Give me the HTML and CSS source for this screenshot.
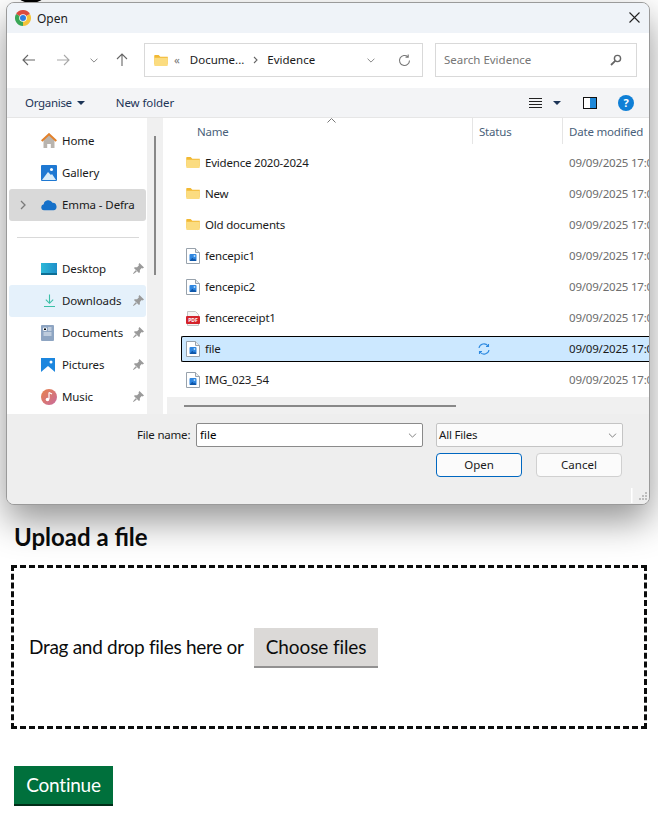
FILE: index.html
```html
<!DOCTYPE html>
<html lang="en">
<head>
    <meta charset="UTF-8">
    <meta name="viewport" content="width=device-width, initial-scale=1.0">
    <title>Upload a file</title>
    <link rel="stylesheet" href="styles.css">
</head>
<body>
    <!-- shared icons -->
    <svg class="icon-defs" aria-hidden="true">
        <symbol id="i-folder" viewBox="0 0 16 13">
            <path d="M0 1.200C0 .5.5 0 1.200 0h4l2 2H16v9H0z" fill="#f2b933"/>
            <path d="M0 3.200h14.800c.7 0 1.200.5 1.200 1.200v7.400c0 .7-.5 1.200-1.200 1.200H1.200C.5 13 0 12.500 0 11.800z" fill="#fbdc80"/>
        </symbol>
        <symbol id="i-image" viewBox="0 0 14 16">
            <path d="M.5.500h9l4 4v11H.5z" fill="#fff" stroke="#98a2ac"/>
            <path d="M9.500.500v4h4" fill="#e9ecef" stroke="#98a2ac"/>
            <rect x="3.500" y="6" width="7" height="7" rx="1" fill="#2f86e0"/>
            <path d="M3.500 13l2.800-3.200 1.700 1.700 1-.9 1.500 2.400z" fill="#0f56a8"/>
            <circle cx="8.500" cy="8" r=".9" fill="#b5dcf8"/>
        </symbol>
        <symbol id="i-pin" viewBox="0 0 12 12">
            <path d="M7 0l5 5-1.500 1-1-.5-2 2V10l-1 1L1 5.500l1-1h2.500l2-2L6 1.500zM2.800 7.800l1.400 1.400L.5 12 0 11.500z" fill="#9a9a9a"/>
        </symbol>
        <symbol id="i-chev" viewBox="0 0 10 6">
            <path d="M.7.700L5 5l4.300-4.300" fill="none" stroke="#6b6b6b" stroke-width="1"/>
        </symbol>
    </svg>

    <div class="peek"></div>

    <div class="dialog">
        <div class="titlebar">
            <svg class="chrome" width="16" height="16" viewBox="0 0 16 16">
                <path d="M8 8L1.070 4A8 8 0 0 1 14.930 4z" fill="#dd4b3e"/>
                <path d="M8 8L14.930 4A8 8 0 0 1 8 16z" fill="#f5c33b"/>
                <path d="M8 8L8 16A8 8 0 0 1 1.070 4z" fill="#3aa757"/>
                <circle cx="8" cy="8" r="3.800" fill="#fff"/>
                <circle cx="8" cy="8" r="3" fill="#2f7de1"/>
            </svg>
            <span class="title">Open</span>
            <svg class="close" width="11" height="11" viewBox="0 0 11 11"><path d="M.5.500l10 10M10.500.500l-10 10" stroke="#222" stroke-width="1.100"/></svg>
        </div>

        <div class="toolbar">
            <span class="nav-btn w35"><svg width="14" height="12" viewBox="0 0 14 12"><path d="M13 6H1M6 1L1 6l5 5" fill="none" stroke="#666" stroke-width="1.100"/></svg></span>
            <span class="nav-btn w34"><svg width="14" height="12" viewBox="0 0 14 12"><path d="M1 6h12M8 1l5 5-5 5" fill="none" stroke="#a8a8a8" stroke-width="1.100"/></svg></span>
            <span class="nav-btn w27"><svg width="8" height="5" viewBox="0 0 10 6"><use href="#i-chev"/></svg></span>
            <span class="nav-btn w30"><svg width="12" height="14" viewBox="0 0 12 14"><path d="M6 13V1M1 6l5-5 5 5" fill="none" stroke="#666" stroke-width="1.100"/></svg></span>
            <div class="address">
                <svg class="addr-folder" width="14" height="11"><use href="#i-folder"/></svg>
                <span class="addr-more">&laquo;</span>
                <span class="addr-part">Docume...</span>
                <svg class="addr-sep" width="5" height="8" viewBox="0 0 5 8"><path d="M1 1l3 3-3 3" fill="none" stroke="#666" stroke-width="1.100"/></svg>
                <span class="addr-part">Evidence</span>
                <svg class="addr-drop" width="8" height="5" viewBox="0 0 10 6"><use href="#i-chev"/></svg>
                <svg class="addr-refresh" width="13" height="13" viewBox="0 0 13 13"><path d="M11.500 6.500a5 5 0 1 1-1.600-3.700M10.200.600v2.700H7.500" fill="none" stroke="#777" stroke-width="1.100"/></svg>
            </div>
            <div class="search">
                <span class="addr-part">Search Evidence</span>
                <svg width="12" height="12" viewBox="0 0 12 12"><circle cx="7.500" cy="4.500" r="3.100" fill="none" stroke="#666" stroke-width="1.400"/><path d="M5.200 6.800L1 11" stroke="#666" stroke-width="1.800"/></svg>
            </div>
        </div>

        <div class="commands">
            <span class="cmd organise">Organise</span>
            <span class="caret"></span>
            <span class="cmd newfolder">New folder</span>
            <svg class="view-icon" width="13" height="10" viewBox="0 0 13 10"><path d="M0 .500h13M0 3.500h13M0 6.500h13M0 9.500h13" stroke="#222"/></svg>
            <span class="caret view-caret"></span>
            <svg class="pane-icon" width="14" height="12" viewBox="0 0 14 12"><rect x=".5" y=".5" width="13" height="11" fill="#fff" stroke="#111"/><rect x="7" y="1" width="6" height="10" fill="#1e88d8"/></svg>
            <span class="help">?</span>
        </div>

        <div class="browser">
            <nav class="sidebar">
                <div class="side-item">
                    <svg class="side-icon" width="16" height="16" viewBox="0 0 16 16"><path d="M2.500 7L8 2l5.500 5v8h-3.700v-4H6.200v4H2.500z" fill="#b9b4ae"/><path d="M.7 8L8 1.200 15.300 8" fill="none" stroke="#e2812b" stroke-width="2"/></svg>
                    <span>Home</span>
                </div>
                <div class="side-item">
                    <svg class="side-icon" width="16" height="16" viewBox="0 0 16 16"><rect width="16" height="16" rx="1" fill="#1e78d2"/><path d="M1 15l6-8 3 3 1-1 4 6z" fill="#d8ebf8"/><circle cx="10.500" cy="4.500" r="1.500" fill="#fff"/></svg>
                    <span>Gallery</span>
                </div>
                <div class="side-item is-current">
                    <svg class="expander" width="6" height="10" viewBox="0 0 6 10"><path d="M1 1l4 4-4 4" fill="none" stroke="#7a7a7a" stroke-width="1.300"/></svg>
                    <svg class="side-icon" width="16" height="11" viewBox="0 0 16 11"><path d="M3.500 11A3.200 3.200 0 0 1 2.700 4.700 4.700 4.700 0 0 1 11.500 3.300 3.900 3.900 0 0 1 12.500 11z" fill="#1570c9"/></svg>
                    <span>Emma - Defra</span>
                </div>
                <div class="side-rule"></div>
                <div class="side-item">
                    <svg class="side-icon" width="16" height="12" viewBox="0 0 16 12"><defs><linearGradient id="g-desk" x1="0" y1="0" x2="1" y2="0"><stop offset="0" stop-color="#2db9d8"/><stop offset="1" stop-color="#1f8fc9"/></linearGradient></defs><rect width="16" height="12" fill="url(#g-desk)"/><rect y="10" width="16" height="2" fill="#0d6e94"/></svg>
                    <span>Desktop</span>
                    <svg class="pin" width="11" height="11"><use href="#i-pin"/></svg>
                </div>
                <div class="side-item is-hover">
                    <svg class="side-icon dl-icon" width="11" height="14" viewBox="0 0 12 14"><path d="M6 0v9M2 5.500L6 9.500l4-4M0 13h12" fill="none" stroke="#3cc0a8" stroke-width="1.200"/></svg>
                    <span>Downloads</span>
                    <svg class="pin" width="11" height="11"><use href="#i-pin"/></svg>
                </div>
                <div class="side-item">
                    <svg class="side-icon" width="13" height="16" viewBox="0 0 13 16"><rect width="13" height="16" rx="1" fill="#8ea5c2"/><path d="M2.500 3h3v2.500h-3zM7 3h3.500M7 5h3.500M2.500 8h8M2.500 10h8" stroke="#eef3f8"/></svg>
                    <span>Documents</span>
                    <svg class="pin" width="11" height="11"><use href="#i-pin"/></svg>
                </div>
                <div class="side-item">
                    <svg class="side-icon" width="14" height="14" viewBox="0 0 14 14"><rect width="14" height="14" fill="#1c86de"/><path d="M0 14l7-6 7 6z" fill="#fff"/><circle cx="10" cy="4" r="1.500" fill="#fff"/></svg>
                    <span>Pictures</span>
                    <svg class="pin" width="11" height="11"><use href="#i-pin"/></svg>
                </div>
                <div class="side-item">
                    <svg class="side-icon" width="16" height="16" viewBox="0 0 16 16"><defs><linearGradient id="g-music" x1="0" y1="0" x2="1" y2="1"><stop offset="0" stop-color="#e8834a"/><stop offset="1" stop-color="#c86a9e"/></linearGradient></defs><circle cx="8" cy="8" r="8" fill="url(#g-music)"/><path d="M8 3.500v6.500" stroke="#fff" stroke-width="1.200"/><circle cx="6.500" cy="10.500" r="1.800" fill="#fff"/><path d="M8 3.500l3 1.500" stroke="#fff" stroke-width="1.200"/></svg>
                    <span>Music</span>
                    <svg class="pin" width="11" height="11"><use href="#i-pin"/></svg>
                </div>
            </nav>
            <div class="side-scroll"><div class="side-thumb"></div></div>

            <section class="files">
                <div class="file-head">
                    <div class="head-cell head-name">Name<svg class="sort" width="9" height="5" viewBox="0 0 9 5"><path d="M.5 4.500l4-4 4 4" fill="none" stroke="#777"/></svg></div>
                    <div class="head-cell">Status</div>
                    <div class="head-cell">Date modified</div>
                </div>
                <div class="file-rows">
                    <div class="file-row">
                        <div class="file-name"><svg class="file-icon" width="14" height="11"><use href="#i-folder"/></svg>Evidence 2020-2024</div><div></div><div class="file-date">09/09/2025 17:00</div>
                    </div>
                    <div class="file-row">
                        <div class="file-name"><svg class="file-icon" width="14" height="11"><use href="#i-folder"/></svg>New</div><div></div><div class="file-date">09/09/2025 17:00</div>
                    </div>
                    <div class="file-row">
                        <div class="file-name"><svg class="file-icon" width="14" height="11"><use href="#i-folder"/></svg>Old documents</div><div></div><div class="file-date">09/09/2025 17:00</div>
                    </div>
                    <div class="file-row">
                        <div class="file-name"><svg class="file-icon" width="14" height="16"><use href="#i-image"/></svg>fencepic1</div><div></div><div class="file-date">09/09/2025 17:00</div>
                    </div>
                    <div class="file-row">
                        <div class="file-name"><svg class="file-icon" width="14" height="16"><use href="#i-image"/></svg>fencepic2</div><div></div><div class="file-date">09/09/2025 17:00</div>
                    </div>
                    <div class="file-row">
                        <div class="file-name"><svg class="file-icon" width="14" height="16" viewBox="0 0 14 16"><path d="M1.500 1.500h8l3 3v11h-11z" fill="#f4f4f4" stroke="#c4c4c4"/><rect y="6" width="14" height="8" rx="1" fill="#d3222a"/><text class="pdf-mark" x="7" y="12.200" text-anchor="middle">PDF</text></svg>fencereceipt1</div><div></div><div class="file-date">09/09/2025 17:00</div>
                    </div>
                    <div class="file-row is-selected">
                        <div class="file-name"><svg class="file-icon" width="14" height="16"><use href="#i-image"/></svg>file</div>
                        <div class="file-status"><svg width="12" height="12" viewBox="0 0 12 12"><path d="M1 5a5 5 0 0 1 9-2M10.500 1v2.500H8M11 7a5 5 0 0 1-9 2M1.500 11V8.500H4" fill="none" stroke="#2f8ae0" stroke-width="1.100"/></svg></div>
                        <div class="file-date">09/09/2025 17:00</div>
                    </div>
                    <div class="file-row">
                        <div class="file-name"><svg class="file-icon" width="14" height="16"><use href="#i-image"/></svg>IMG_023_54</div><div></div><div class="file-date">09/09/2025 17:00</div>
                    </div>
                </div>
                <div class="list-scroll"><div class="list-thumb"></div></div>
            </section>
        </div>

        <div class="footer-bar">
            <div class="name-row">
                <label class="name-label" for="file-name">File name:</label>
                <div class="name-box">
                    <input id="file-name" class="name-input" value="file">
                    <svg width="9" height="5" viewBox="0 0 10 6"><use href="#i-chev"/></svg>
                </div>
                <div class="type-box">
                    <span class="type-text">All Files</span>
                    <svg width="9" height="5" viewBox="0 0 10 6"><use href="#i-chev"/></svg>
                </div>
            </div>
            <div class="button-row">
                <button class="dlg-btn dlg-primary">Open</button>
                <button class="dlg-btn">Cancel</button>
            </div>
            <svg class="grip" width="18" height="16" viewBox="0 0 18 16">
                <rect x="0" y="0" width="1.500" height="15" fill="#fff"/>
                <path d="M14 4h2v2h-2zM11 7h2v2h-2zM14 7h2v2h-2zM8 10h2v2H8zM11 10h2v2h-2zM14 10h2v2h-2z" fill="#bdbdbd"/>
            </svg>
        </div>
    </div>

    <main class="page">
        <h2 class="page-title">Upload a file</h2>
        <div class="dropzone">
            <span class="drop-text">Drag and drop files here or</span>
            <button class="btn-secondary">Choose files</button>
        </div>
        <button class="btn-primary">Continue</button>
    </main>
</body>
</html>
```

FILE: styles.css
```css
* {
    box-sizing: border-box;
}

body {
    margin: 0;
    background-color: #fff;
    color: #0b0c0c;
    font-family: Lato, Arial, sans-serif;
}

.icon-defs {
    position: absolute;
    width: 0;
    height: 0;
}

/* the dark edge poking out above the dialog */
.peek {
    position: absolute;
    left: 18px;
    top: -12px;
    width: 26px;
    height: 15px;
    border-radius: 50%;
    background-color: #000;
}

.dialog {
    position: absolute;
    left: 6px;
    top: 2px;
    width: 644px;
    height: 503px;
    display: flex;
    flex-direction: column;
    overflow: hidden;
    border: 1px solid #9a9a9a;
    border-radius: 8px;
    background-color: #eee;
    font-family: "Noto Sans", Arial, sans-serif;
    font-size: 11.5px;
    letter-spacing: -0.2px;
    color: #1a1a1a;
    box-shadow: 0 16px 36px rgba(0, 0, 0, 0.42);
}

.titlebar {
    height: 30px;
    flex: none;
    display: flex;
    align-items: center;
    padding-left: 8px;
    background-color: #eff3f8;
}

.title {
    margin-left: 6px;
    font-size: 12px;
    letter-spacing: 0;
}

.close {
    margin-left: auto;
    margin-right: 9px;
    margin-bottom: 2px;
}

.toolbar {
    height: 55px;
    flex: none;
    display: flex;
    align-items: center;
    padding-left: 4px;
    padding-bottom: 1px;
    background-color: #fff;
}

.nav-btn {
    display: flex;
    align-items: center;
    justify-content: center;
}

.w35 { width: 35px; }
.w34 { width: 34px; }
.w27 { width: 27px; }
.w30 { width: 30px; }

.address,
.search {
    height: 34px;
    display: flex;
    align-items: center;
    border: 1px solid #d9d9d9;
    letter-spacing: 0;
}

.address {
    width: 279px;
    margin-left: 7px;
    padding-left: 9px;
}

.addr-part {
    margin-bottom: 1px;
}

.addr-more {
    margin-left: 6px;
    margin-right: 10px;
    margin-bottom: 2px;
    color: #777;
}

.addr-sep {
    margin-left: 9px;
    margin-right: 9px;
}

.addr-drop {
    margin-left: auto;
}

.addr-refresh {
    margin-left: 23px;
    margin-right: 11px;
}

.search {
    width: 202px;
    margin-left: 12px;
    padding: 0 14px 0 8px;
    justify-content: space-between;
    color: #767676;
}

.commands {
    height: 30px;
    flex: none;
    display: flex;
    align-items: center;
    background-color: #f3f4f6;
    border-bottom: 1px solid #e6e6e6;
    color: #1d3557;
}

.organise {
    margin-left: 18px;
    letter-spacing: -0.3px;
}

.caret {
    width: 0;
    height: 0;
    margin-left: 5px;
    border-left: 4px solid transparent;
    border-right: 4px solid transparent;
    border-top: 4px solid #1d3557;
}

.newfolder {
    margin-left: 31px;
    letter-spacing: -0.1px;
}

.view-icon {
    margin-left: auto;
}

.view-caret {
    margin-left: 11px;
}

.pane-icon {
    margin-left: 22px;
}

.help {
    width: 16px;
    height: 16px;
    margin-left: 21px;
    margin-right: 15px;
    border-radius: 50%;
    background-color: #0f7fd6;
    color: #fff;
    font-size: 11px;
    font-weight: 700;
    line-height: 16px;
    text-align: center;
}

.browser {
    height: 296px;
    flex: none;
    display: flex;
    background-color: #fff;
}

.sidebar {
    width: 140px;
    flex: none;
    padding: 7px 1px 0 2px;
    overflow: hidden;
    background-color: #fff;
    letter-spacing: -0.1px;
}

.side-item {
    position: relative;
    height: 32px;
    display: flex;
    align-items: center;
    padding-left: 53px;
    padding-bottom: 2px;
    border-radius: 3px;
    white-space: nowrap;
}

.side-icon {
    position: absolute;
    left: 32px;
    top: 50%;
    transform: translateY(-50%);
}

.dl-icon {
    left: 35px;
}

.expander {
    position: absolute;
    left: 11px;
    top: 11px;
}

.is-current {
    background-color: #d9d9d9;
}

.is-hover {
    background-color: #e5f1fb;
}

.pin {
    position: absolute;
    left: 124px;
    top: 10px;
}

.side-rule {
    height: 1px;
    margin: 16px 7px 15px 8px;
    background-color: #d9d9d9;
}

.side-scroll {
    width: 16px;
    flex: none;
    padding: 18px 0 0 7px;
    background-color: #f0f0f0;
}

.side-thumb {
    width: 2px;
    height: 139px;
    background-color: #888;
}

.files {
    flex: 1;
    min-width: 0;
    display: flex;
    flex-direction: column;
    margin-left: 4px;
    overflow: hidden;
}

.file-head {
    height: 26px;
    flex: none;
    display: grid;
    grid-template-columns: 305px 90px 1fr;
    color: #4a5f7a;
}

.head-cell {
    position: relative;
    display: flex;
    align-items: center;
    padding-left: 6px;
    border-left: 1px solid #e5e5e5;
    white-space: nowrap;
}

.head-name {
    padding-left: 30px;
    border-left: 0;
}

.sort {
    position: absolute;
    left: 160px;
    top: 0;
}

.file-rows {
    flex: 1;
    display: flex;
    flex-direction: column;
    gap: 5px;
    padding: 6px 0 0 14px;
    overflow: hidden;
}

.file-row {
    width: 480px;
    height: 26px;
    flex: none;
    display: grid;
    grid-template-columns: 291px 90px 1fr;
    align-items: center;
    padding-bottom: 1px;
}

.file-name {
    display: flex;
    align-items: center;
    padding-left: 5px;
}

.file-icon {
    margin-right: 5px;
}

.pdf-mark {
    fill: #fff;
    font-size: 5px;
    font-weight: 700;
    letter-spacing: 0;
}

.file-date {
    padding-left: 7px;
    color: #6d6d6d;
    white-space: nowrap;
}

.file-status {
    display: flex;
    padding-left: 6px;
}

.is-selected {
    grid-template-columns: 290px 90px 1fr;
    background-color: #cce8ff;
    border-top: 1px solid #000;
    border-bottom: 1px solid #000;
    border-left: 1px solid #000;
    border-radius: 2px 0 0 2px;
}

.is-selected .file-name {
    padding-left: 4px;
}

.is-selected .file-date {
    color: #1a1a1a;
}

.list-scroll {
    height: 17px;
    flex: none;
    padding: 8px 0 0 17px;
    background-color: #f0f0f0;
}

.list-thumb {
    width: 272px;
    height: 2px;
    background-color: #888;
}

.footer-bar {
    position: relative;
    flex: 1;
    padding-top: 9px;
    background-color: #eee;
}

.name-row {
    display: flex;
    align-items: center;
    padding-left: 130px;
}

.name-label {
    width: 59px;
    flex: none;
    margin-bottom: 2px;
}

.name-box,
.type-box {
    height: 24px;
    display: flex;
    align-items: center;
    justify-content: space-between;
    padding-right: 5px;
    border-radius: 2px;
    background-color: #fff;
}

.name-box {
    width: 227px;
    border: 1px solid #8a8a8a;
}

.name-input {
    width: 190px;
    padding: 0 0 2px 3px;
    border: 0;
    outline: none;
    background: none;
    color: #000;
    font: inherit;
}

.type-box {
    width: 187px;
    margin-left: 13px;
    padding-left: 2px;
    border: 1px solid #c4c4c4;
    background-color: #fbfbfb;
}

.type-text {
    margin-bottom: 2px;
}

.button-row {
    display: flex;
    gap: 14px;
    margin-top: 6px;
    margin-left: 429px;
}

.dlg-btn {
    width: 86px;
    height: 24px;
    padding: 0 0 2px;
    border: 1px solid #d0d0d0;
    border-radius: 4px;
    background-color: #fbfbfb;
    color: #1a1a1a;
    font: inherit;
}

.dlg-primary {
    border-color: #0067c0;
}

.grip {
    position: absolute;
    right: 0;
    bottom: 0;
}

/* page behind the dialog */
.page {
    padding: 522px 11px 0;
    font-size: 19px;
}

.page-title {
    margin: 0 0 13px 3px;
    font-size: 24px;
    line-height: 30px;
    font-weight: 700;
}

.dropzone {
    width: 636px;
    height: 164px;
    display: flex;
    align-items: center;
    gap: 10px;
    padding-left: 15px;
    border: 3px dashed #0b0c0c;
}

.drop-text {
    margin-bottom: 2px;
    letter-spacing: -0.3px;
}

.btn-secondary,
.btn-primary {
    height: 40px;
    padding: 0 12px 4px;
    border: 0;
    font: inherit;
}

.btn-secondary {
    margin-top: 2px;
    letter-spacing: -0.1px;
    background-color: #dbd9d7;
    box-shadow: inset 0 -2px 0 #929191;
    color: #0b0c0c;
}

.btn-primary {
    display: block;
    width: 99px;
    margin: 37px 0 0 3px;
    letter-spacing: -0.25px;
    background-color: #00703c;
    box-shadow: inset 0 -2px 0 #002d18;
    color: #fff;
}
```
